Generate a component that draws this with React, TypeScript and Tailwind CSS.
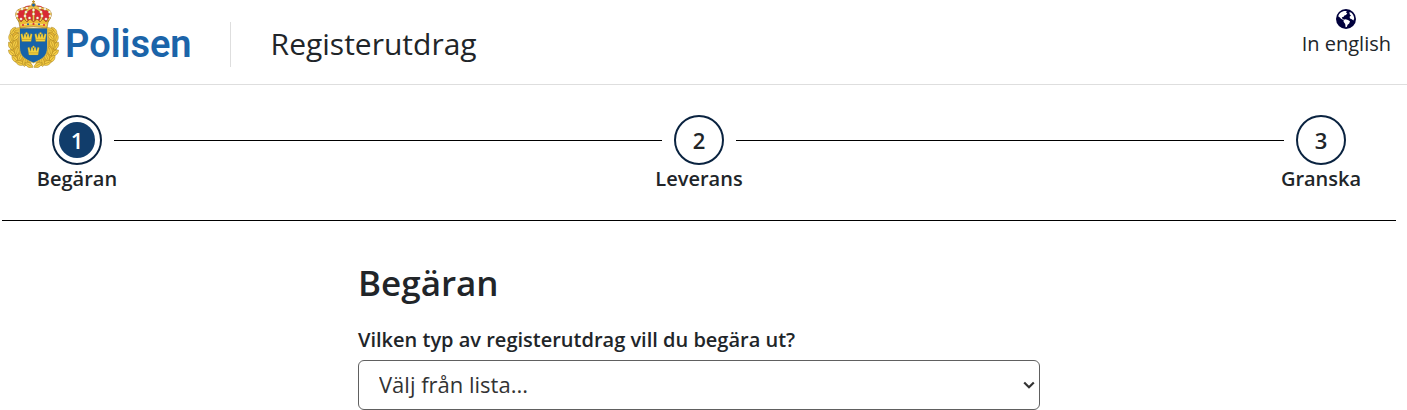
import { Fragment } from "react";

const steps = ["Begäran", "Leverans", "Granska"];

const leaves = [
  [5, 31, 35], [10, 30, 80], [3, 38, -10], [8, 37, 40], [3, 46, -30], [7, 44, 20],
  [4, 53, -50], [9, 51, 10], [7, 59, -40], [12, 57, 20], [12, 63, -70], [17, 62, 10], [21, 65, -60],
];

function SmallCrown({ x, y }: { x: number; y: number }) {
  return (
    <g transform={`translate(${x} ${y})`} fill="#f5d23c" stroke="#7d7a3a" strokeWidth="0.3">
      <path d="M-4.6 4.5 -5.8-2.7 -4.2-3.6 -2.9.7 -2.2-3.2 -.9-3.4 0 .4 .9-3.4 2.2-3.2 2.9.7 4.2-3.6 5.8-2.7 4.6 4.5Z" />
      <circle cx="0" cy="-3.6" r="1.1" />
      <path d="M-4.5 2.4H4.5" stroke="#a5832a" strokeWidth="0.5" />
    </g>
  );
}

function WreathHalf() {
  return (
    <g fill="#f6cd45" stroke="#9c7a1c" strokeWidth="0.45">
      <path d="M10 28C2 33 1 44 3 51C5 60 14 66 24 66L22 61C13 58 11 50 11 42Z" fill="#e3b232" />
      {leaves.map(([x, y, angle]) => (
        <path
          key={`${x}-${y}`}
          transform={`translate(${x} ${y}) rotate(${angle})`}
          d="M0-4.6C3-2 3 2 0 4.6C-3 2-3-2 0-4.6ZM0-3V3"
        />
      ))}
    </g>
  );
}

function Crest() {
  return (
    <svg viewBox="0 0 52 68" className="h-[68px] w-[52px] shrink-0" aria-hidden="true">
      <WreathHalf />
      <g transform="matrix(-1 0 0 1 51 0)">
        <WreathHalf />
      </g>
      <path d="M11.5 28H39.5V47C39.5 56 35 59 25.5 63C16 59 11.5 56 11.5 47Z" fill="#1763a9" stroke="#e9bd3a" strokeWidth="0.8" />
      <SmallCrown x={18.5} y={37} />
      <SmallCrown x={32.5} y={37} />
      <SmallCrown x={25.5} y={50.5} />
      <path d="M12 22C5 15 8 9 15 8C18 5 22 5 25.5 6C29 5 33 5 36 8C43 9 46 15 39 22Z" fill="#d92a34" />
      <g fill="none" stroke="#8a6422" strokeWidth="2">
        <path d="M12 22C6 15 8 10 14 9C19 8 23 7 25.5 6C28 7 32 8 37 9C43 10 45 15 39 22M19 21C15 15 17 10 25.5 7C34 10 36 15 32 21M25.5 7V21" />
      </g>
      <g fill="none" stroke="#f0c44c" strokeWidth="1.5">
        <path d="M12 22C6 15 8 10 14 9C19 8 23 7 25.5 6C28 7 32 8 37 9C43 10 45 15 39 22M19 21C15 15 17 10 25.5 7C34 10 36 15 32 21M25.5 7V21" />
      </g>
      <g fill="#fffaf0" stroke="#b08d55" strokeWidth="0.25">
        {[[9, 16], [9.5, 12], [14, 9], [19, 8], [18, 12], [17, 16], [25.5, 10], [25.5, 14], [33, 12], [34, 16], [32, 8], [37, 9], [41.5, 12], [42, 16], [21.5, 18], [29.5, 18], [13, 19], [38, 19]].map(([x, y]) => (
          <circle key={`${x}-${y}`} cx={x} cy={y} r="1.3" />
        ))}
      </g>
      <path d="M10.5 20 13 22 16 19 19 22 22 19 25.5 22 29 19 32 22 35 19 38 22 40.5 20 39 28Q25.5 25 12 28Z" fill="#edbd36" stroke="#805b18" strokeWidth="0.5" />
      <path d="M12.5 25Q25.5 22 38.5 25" fill="none" stroke="#fff2c8" strokeWidth="0.6" />
      <circle cx="15" cy="25" r="1" fill="#d92a34" />
      <circle cx="20" cy="24.3" r="1" fill="#1763a9" />
      <circle cx="25.5" cy="24" r="1.1" fill="#d92a34" />
      <circle cx="31" cy="24.3" r="1" fill="#1763a9" />
      <circle cx="36" cy="25" r="1" fill="#d92a34" />
      <circle cx="25.5" cy="5" r="2" fill="#1763a9" stroke="#d9a72f" strokeWidth="0.9" />
      <path d="M25.5 .2V3.4M24 1.6H27" stroke="#c4932a" strokeWidth="1.1" />
    </svg>
  );
}

function Globe() {
  return (
    <svg viewBox="0 0 20 20" className="size-5" aria-hidden="true">
      <circle cx="10" cy="10" r="10" fill="#00003c" />
      <g fill="#fff">
        <path d="M2.2 7.2C3 4.6 5.2 2.6 8 2L10.8 1.9 10 3.4 11.3 4.2 10 6 8.4 6.4 7.4 8 5.8 8.2 6.4 9.8 8 10.4 7.4 11 5 9.8 3.6 8.2Z" />
        <path d="M7.6 10.8 9.6 10.2 12 11 14 12.2 13.2 14.6 11.6 15.8 10.8 18 9.6 18.2 9.2 15 7.6 12.8Z" />
        <path d="M13.4 3 15.4 3.8C17 5.2 18 7.2 18.2 9.6L17.4 11.4 15.8 10.2 14 9.6 13.6 7.8 15 6.4 13.8 5.4Z" />
      </g>
    </svg>
  );
}

export default function App() {
  return (
    <div className="bg-white font-['Open_Sans',sans-serif] text-[#212529]">
      <header className="flex h-[85px] items-start justify-between border-b border-[#dedede] pr-4 pl-2">
        <div className="flex items-start">
          <a href="#" className="flex items-start gap-[5px]" aria-label="Polisen">
            <Crest />
            <span className="pt-[22px] font-[Roboto,sans-serif] text-[38px] leading-[44px] font-semibold text-[#1b64a9]">
              Polisen
            </span>
          </a>
          <div className="mt-[22px] ml-[38px] flex h-[45px] items-start border-l border-[#dedede] pl-10 text-[30px] leading-[44px]">
            Registerutdrag
          </div>
        </div>
        <a href="#" className="flex flex-col items-center pt-[9px] text-xl leading-[30px]">
          <Globe />
          In english
        </a>
      </header>

      <main className="pr-[11px] pl-[2px]">
        <ol className="flex items-start border-b border-black px-[50px] pt-[30px] pb-[27px]">
          {steps.map((label, i) => (
            <Fragment key={label}>
              {i > 0 && <li aria-hidden="true" className="mx-3 mt-[25px] h-px flex-1 bg-black" />}
              <li className="flex w-[50px] flex-col items-center" aria-current={i === 0 ? "step" : undefined}>
                <span className="flex size-[50px] items-center justify-center rounded-full border-2 border-[#0a2340] text-[22px] font-semibold">
                  {i === 0 ? (
                    <span className="flex size-9 items-center justify-center rounded-full bg-[#113d6b] text-white">1</span>
                  ) : (
                    i + 1
                  )}
                </span>
                <span className="text-xl leading-7 font-semibold">{label}</span>
              </li>
            </Fragment>
          ))}
        </ol>

        <form className="mx-auto flex max-w-[682px] flex-col pt-[38px]">
          <h1 className="text-[35px] leading-[48px] font-semibold">Begäran</h1>
          <label htmlFor="extract-type" className="mt-[18px] text-xl leading-[30px] font-semibold">
            Vilken typ av registerutdrag vill du begära ut?
          </label>
          <div className="mt-[5px] grid items-center">
            <select
              id="extract-type"
              className="col-start-1 row-start-1 h-[50px] w-full appearance-none rounded-md border border-[#606060] bg-white pr-8 pb-[2px] pl-5 text-[22px] text-[#333]"
            >
              <option>Välj från lista...</option>
            </select>
            <svg
              viewBox="0 0 12 8"
              className="pointer-events-none col-start-1 row-start-1 mr-[5px] h-2 w-3 justify-self-end"
              aria-hidden="true"
            >
              <path d="M1.2 1.5 6 6.2 10.8 1.5" fill="none" stroke="#333" strokeWidth="2.2" />
            </svg>
          </div>
        </form>
      </main>
    </div>
  );
}
